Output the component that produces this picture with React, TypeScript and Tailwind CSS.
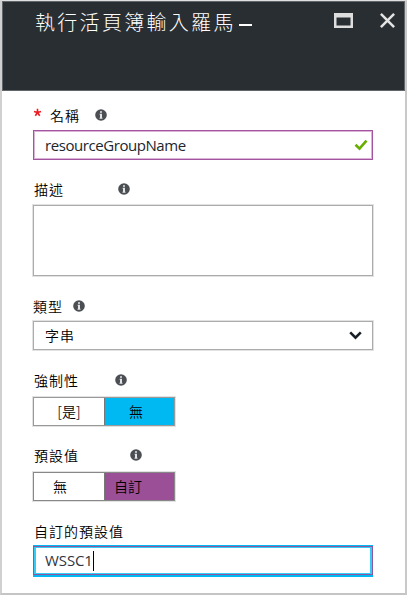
import React from "react";

const cjk = "font-['Noto_Sans_CJK_TC',sans-serif]";
const latin = "font-['Open_Sans','Noto_Sans',sans-serif]";

function Info() {
  return (
    <svg className="shrink-0" width="12" height="12" viewBox="0 0 12 12">
      <circle cx="6" cy="6" r="5.8" fill="#4b4f54" />
      <path d="M5 2.2h2v1.6H5zM4.6 4.8H7v4h.5v.9h-3v-.9H5V5.7h-.4z" fill="#e4e4e4" />
    </svg>
  );
}

function Label({ text, width, className = "" }: { text: string; width: string; className?: string }) {
  return (
    <div className={`flex h-[20px] items-center ${className}`}>
      <span className={`text-[14px] leading-[20px] tracking-[1px] whitespace-nowrap ${width}`}>{text}</span>
      <Info />
    </div>
  );
}

export default function App() {
  return (
    <div className={`flex h-[596px] w-[407px] flex-col bg-white font-[350] text-black ${cjk}`}>
      <div className="flex h-[595px] flex-col border-t border-r-2 border-b-2 border-l-2 border-t-[#e0e0e0] border-r-[#c9c9c9] border-b-[#c4c4c4] border-l-[#d0d0d0]">
        <header className="flex h-[90px] shrink-0 items-start border border-[#60666a] bg-[#292e32] text-white">
          <h1 className="mt-[6px] ml-[32px] flex items-center text-[20px] leading-[28px] font-light tracking-[2.3px] whitespace-nowrap">
            執行活頁簿輸入羅馬
            <span className="mt-[5px] ml-[3px] h-[2px] w-[13px] bg-white" />
          </h1>
          <svg className="mt-[11px] mr-[26px] ml-auto" width="19" height="15" viewBox="0 0 19 15">
            <path fill="#dedede" fillRule="evenodd" d="M0 0h19v15H0zM2.5 4.5v8h14v-8z" />
          </svg>
          <svg className="mt-[10px] mr-[8px]" width="17" height="17" viewBox="0 0 17 17">
            <path d="M1.9 1.9l13.2 13.2M15.1 1.9L1.9 15.1" stroke="#e4e4e4" strokeWidth="2.5" fill="none" />
          </svg>
        </header>

        <main className="flex flex-col pr-[32px] pl-[31px]">
          <div className="mt-[14px] flex h-[20px] items-center">
            <svg width="9" height="9" viewBox="0 0 9 9" className="mb-[5px]">
              <path d="M4.5 4.5V.8M4.5 4.5L1 3.4M4.5 4.5L8 3.4M4.5 4.5L2.3 7.8M4.5 4.5L6.7 7.8" stroke="#ed1c24" strokeWidth="1.6" />
            </svg>
            <span className="ml-[8px] w-[45px] text-[14px] leading-[20px] tracking-[1px]">名稱</span>
            <Info />
          </div>
          <div className="mt-[5px] flex h-[30px] items-center justify-between border border-[#a453a0] pr-[4px] pl-[11px] outline outline-1 -outline-offset-2 outline-[#d9b4d7]">
            <span className={`text-[15px] font-normal tracking-[-0.43px] text-[#20262c] ${latin}`}>resourceGroupName</span>
            <svg width="14" height="12" viewBox="0 0 14 12">
              <path d="M1.5 5.8l4 3.9 7-8" stroke="#68ad00" strokeWidth="2.6" fill="none" />
            </svg>
          </div>

          <Label text="描述" width="w-[84px]" className="mt-[19px] pl-px" />
          <div className="mt-[6px] h-[71px] border border-[#ababab] outline outline-1 outline-[#e2e2e2]" />

          <Label text="類型" width="w-[40px]" className="mt-[20px]" />
          <div className="mt-[5px] flex h-[29px] items-center justify-between border border-[#ababab] pr-[10px] pl-[11px] outline outline-1 outline-[#e2e2e2]">
            <span className="text-[14px] tracking-[1px]">字串</span>
            <svg width="13" height="9" viewBox="0 0 13 9">
              <path d="M1.2 1.4l5.3 5.2 5.3-5.2" stroke="#181e26" strokeWidth="2.6" fill="none" />
            </svg>
          </div>

          <Label text="強制性" width="w-[81px]" className="mt-[20px] pl-px" />
          <div className="mt-[7px] flex h-[29px] w-[142px] border border-[#999] text-[14px] outline outline-1 outline-[#e2e2e2]">
            <div className="flex w-[70px] items-center justify-center">
              <span className="text-[#171c30]">[</span>是<span className="text-[#171c30]">]</span>
            </div>
            <div className="flex flex-1 items-center border-l border-[#777] bg-[#00b9f2] pl-[24px]">無</div>
          </div>

          <Label text="預設值" width="w-[96px]" className="mt-[19px] pl-px" />
          <div className="mt-[7px] flex h-[29px] w-[142px] border border-[#888] text-[14px] outline outline-1 outline-[#e2e2e2]">
            <div className="flex w-[70px] items-center pl-[19px]">無</div>
            <div className="flex flex-1 items-center border-l border-[#777] bg-[#9b4f96] pl-[9px]">自訂</div>
          </div>

          <div className="mt-[20px] h-[20px] pl-px text-[14px] leading-[20px] tracking-[1px]">自訂的預設值</div>
          <div className="mt-[4px] flex h-[32px] shrink-0 bg-[#00b9f2] pt-px pb-[2px]">
            <div className="flex flex-1 border border-[#8f559f] bg-[#35cdf5] px-[2px] py-px">
              <div className="flex flex-1 items-center bg-white pl-[9px]">
                <span className={`text-[15px] font-normal tracking-[-0.1px] text-[#30363e] ${latin}`}>WSSC1</span>
                <span className="h-[20px] w-px bg-black" />
              </div>
            </div>
          </div>
        </main>
      </div>
    </div>
  );
}
